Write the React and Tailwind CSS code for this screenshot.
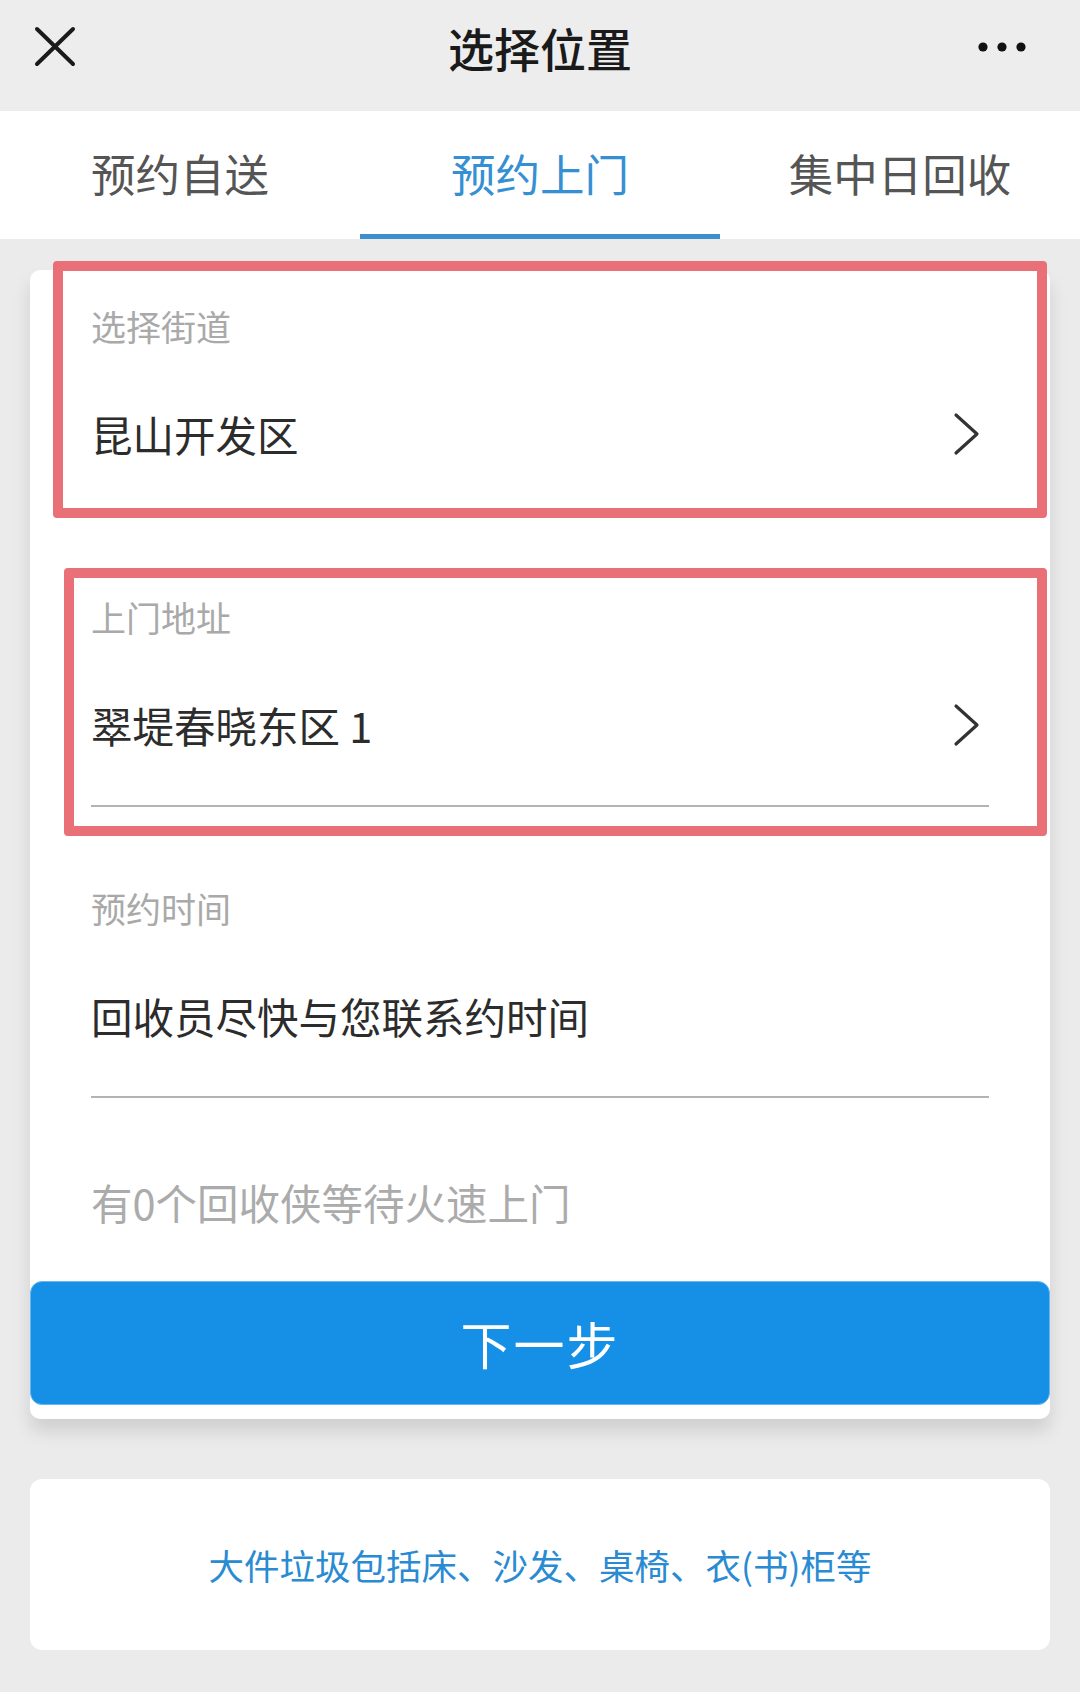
import React from "react";

const FONT = { fontFamily: '"Noto Sans CJK SC", "Noto Sans", sans-serif' };

function Chevron() {
  return (
    <svg width="28" height="44" viewBox="0 0 28 44" className="shrink-0 mr-[8px]">
      <path d="M3 3 L24 22 L3 41" fill="none" stroke="#333" strokeWidth="3.2" strokeLinecap="round" strokeLinejoin="round" />
    </svg>
  );
}

function Section({ label, value, chevron, first }) {
  return (
    <div className={first ? "pt-[38px]" : "pt-[83px]"}>
      <div className="text-[35px] leading-[36px] text-[#a9a9a9]">{label}</div>
      <div className="mt-[66px] flex items-center justify-between h-[48px]">
        <div className="text-[41.5px] leading-[48px] text-[#2c2c2c]">{value}</div>
        {chevron && <Chevron />}
      </div>
      <div className="mt-[56px] h-[2px] bg-[#b3b3b3]" />
    </div>
  );
}

export default function App() {
  return (
    <div className="w-[1080px] h-[1692px] bg-[#ebebeb] overflow-hidden" style={FONT}>
      {/* Header */}
      <div className="h-[111px] bg-[#ededed] flex items-center justify-between px-[33px] pb-[18px] relative">
        <svg width="44" height="44" viewBox="0 0 44 44">
          <path d="M4 4 L40 39 M40 4 L4 39" stroke="#1a1a1a" strokeWidth="4" strokeLinecap="round" />
        </svg>
        <div className="absolute left-0 right-0 top-[17px] text-center text-[46px] font-medium text-[#1a1a1a] leading-[60px] pointer-events-none">
          选择位置
        </div>
        <svg width="50" height="12" viewBox="0 0 50 12" className="mr-[20px]">
          <circle cx="6" cy="6" r="4.6" fill="#111" />
          <circle cx="25" cy="6" r="4.6" fill="#111" />
          <circle cx="44" cy="6" r="4.6" fill="#111" />
        </svg>
      </div>

      {/* Tabs */}
      <div className="h-[128px] bg-white grid grid-cols-3">
        <div className="flex items-center justify-center text-[44.5px] text-[#555] pb-[4px]">预约自送</div>
        <div className="relative flex items-center justify-center text-[44.5px] text-[#3590d3] pb-[4px]">
          预约上门
          <div className="absolute left-0 right-0 bottom-0 h-[5px] bg-[#3a8fcc]" />
        </div>
        <div className="flex items-center justify-center text-[44.5px] text-[#555] pb-[4px]">集中日回收</div>
      </div>

      {/* Main card */}
      <div className="relative mt-[31px] mx-[30px] bg-white rounded-[10px] shadow-[0_12px_18px_rgba(0,0,0,0.12)] pb-[14px]">
        <div className="px-[61px]">
          <Section first label="选择街道" value="昆山开发区" chevron />
          <Section label="上门地址" value="翠堤春晓东区 1" chevron />
          <Section label="预约时间" value="回收员尽快与您联系约时间" />
          <div className="mt-[83px] text-[41.5px] leading-[42px] text-[#ababab]">有0个回收侠等待火速上门</div>
        </div>
        <div className="mt-[58px] h-[124px] rounded-[12px] bg-[#1590e6] border border-[#6cb8ee] flex items-center justify-center text-white text-[51px] tracking-[2px]">
          下一步
        </div>

        {/* annotation overlays */}
        <div className="absolute left-[23px] top-[-9px] w-[994px] h-[257px] border-[10px] border-[#ea7077] rounded-[4px] pointer-events-none" />
        <div className="absolute left-[34px] top-[298px] w-[983px] h-[268px] border-[10px] border-[#ea7077] rounded-[4px] pointer-events-none" />
      </div>

      {/* Bottom card */}
      <div className="mt-[60px] mx-[30px] h-[171px] bg-white rounded-[12px] flex items-center justify-center text-[35.5px] text-[#2a8bd2]">
        大件垃圾包括床、沙发、桌椅、衣(书)柜等
      </div>
    </div>
  );
}
